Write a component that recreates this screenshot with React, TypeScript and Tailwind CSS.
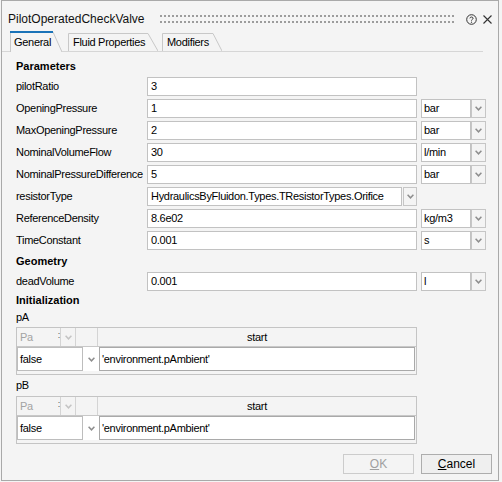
import React from 'react';

const Chevron = ({ color = '#8e8e8e' }: { color?: string }) => (
  <svg width="7" height="5" viewBox="0 0 7 5">
    <path d="M0.6 0.8 L3.5 3.8 L6.4 0.8" stroke={color} strokeWidth="1.5" fill="none" />
  </svg>
);

const ArrowBox = ({ w = 'w-[15px]' }: { w?: string }) => (
  <div className={`${w} h-[19px] border border-[#c6c6c6] bg-[#f4f4f4] flex items-center justify-center`}>
    <Chevron />
  </div>
);

type RowProps = { label: string; value: string; unit?: string };

const Row = ({ label, value, unit }: RowProps) => (
  <div className="flex h-[22px] items-start pt-[1px]">
    <div className="w-[131px] h-[19px] flex items-center">{label}</div>
    <div className="w-[270px] h-[19px] border border-[#c2c2c2] bg-white flex items-center pl-[3px]">{value}</div>
    {unit !== undefined && (
      <>
        <div className="ml-[4px] w-[50px] h-[19px] border border-[#c2c2c2] bg-white flex items-center pl-[2px]">{unit}</div>
        <ArrowBox />
      </>
    )}
  </div>
);

const InitTable = () => (
  <div className="w-[401px] h-[48px] border border-[#c4c4c4] bg-[#f4f4f4] flex flex-col">
    <div className="flex h-[19px] border-b border-[#c8c8c8]">
      <div className="w-[44px] h-[18px] border-r border-[#d4d4d4] flex items-center pl-[3px] text-[#a3a3a3] relative">
        Pa
        <span className="absolute right-[0px] top-[3px] text-[#555] text-[9px] leading-none">:</span>
      </div>
      <div className="w-[15px] h-[18px] border-r border-[#d4d4d4] flex items-center justify-center">
        <Chevron color="#c4c4c4" />
      </div>
      <div className="w-[22px] h-[18px] border-r border-[#d4d4d4]" />
      <div className="flex-1 h-[18px] flex items-center justify-center">start</div>
    </div>
    <div className="flex h-[24px]">
      <div className="w-[66px] h-[24px] border border-[#bdbdbd] bg-white flex items-center pl-[2px]">false</div>
      <div className="w-[16px] h-[24px] bg-white flex items-center justify-center">
        <Chevron />
      </div>
      <div className="w-[316px] h-[24px] border border-[#a9a9a9] bg-white flex items-center pl-[2px]">'environment.pAmbient'</div>
    </div>
  </div>
);

export default function App() {
  return (
    <div className="w-[502px] h-[482px] bg-[#f4f4f4]">
      <div className="ml-[1px] w-[498px] h-[481px] border border-[#a9a9a9] bg-[#f4f4f4] flex flex-col font-['Liberation_Sans',Arial,sans-serif] text-[11px] tracking-[-0.3px] text-black">
        {/* Title bar */}
        <div className="h-[30px] pt-[6px] flex items-center">
          <div className="w-[158px] pl-[6px] text-[12px] tracking-normal text-[#111]">PilotOperatedCheckValve</div>
          <svg width="295" height="8" className="block">
            <defs>
              <pattern id="grip" width="4" height="6" patternUnits="userSpaceOnUse">
                <rect x="0" y="0" width="2" height="2" fill="#9c9c9c" />
              </pattern>
            </defs>
            <rect x="0" y="0" width="295" height="8" fill="url(#grip)" />
          </svg>
          <svg width="11" height="11" viewBox="0 0 11 11" className="ml-[11px] block">
            <circle cx="5.5" cy="5.5" r="4.8" stroke="#333" strokeWidth="1" fill="none" />
            <path d="M3.9 4.3 C3.9 2.6 7.1 2.6 7.1 4.3 C7.1 5.4 5.5 5.3 5.5 6.6" stroke="#333" strokeWidth="1" fill="none" />
            <circle cx="5.5" cy="8.2" r="0.6" fill="#333" />
          </svg>
          <svg width="9" height="9" viewBox="0 0 9 9" className="ml-[6px] block">
            <path d="M0.5 0.5 L8.5 8.5 M8.5 0.5 L0.5 8.5" stroke="#333" strokeWidth="1.1" />
          </svg>
        </div>

        {/* Tab bar */}
        <div className="w-[481px] h-[21px] border-b border-[#d6d6d6] flex items-end pl-[8px]">
          <div className="relative w-[52px] h-[21px] -mb-[1px] flex items-center pl-[4px] pt-[1px]">
            <svg width="52" height="21" className="absolute left-0 top-0">
              <polygon points="0,0 43,0 52,21 0,21" fill="#f4f4f4" />
              <path d="M0.5 21 V1 M43 1 L52 21" stroke="#c8c8c8" strokeWidth="1" fill="none" />
              <rect x="0" y="0" width="43" height="2" fill="#1a73b8" />
            </svg>
            <span className="relative">General</span>
          </div>
          <div className="relative ml-[6px] w-[90px] h-[18px] flex items-center pl-[5px]">
            <svg width="90" height="18" className="absolute left-0 top-0">
              <path d="M0.5 18 V0.5 H80 L90 18" stroke="#c8c8c8" strokeWidth="1" fill="none" />
            </svg>
            <span className="relative">Fluid Properties</span>
          </div>
          <div className="relative ml-[4px] w-[60px] h-[18px] flex items-center pl-[5px]">
            <svg width="60" height="18" className="absolute left-0 top-0">
              <path d="M0.5 18 V0.5 H51 L60 18" stroke="#c8c8c8" strokeWidth="1" fill="none" />
            </svg>
            <span className="relative">Modifiers</span>
          </div>
        </div>

        {/* Pane */}
        <div className="pl-[14px] pt-[4px] flex flex-col">
          <div className="h-[20px] flex items-center font-bold tracking-normal">Parameters</div>
          <Row label="pilotRatio" value="3" />
          <Row label="OpeningPressure" value="1" unit="bar" />
          <Row label="MaxOpeningPressure" value="2" unit="bar" />
          <Row label="NominalVolumeFlow" value="30" unit="l/min" />
          <Row label="NominalPressureDifference" value="5" unit="bar" />
          <div className="flex h-[22px] items-start pt-[1px]">
            <div className="w-[131px] h-[19px] flex items-center">resistorType</div>
            <div className="w-[255px] h-[19px] border border-[#c2c2c2] bg-white flex items-center pl-[3px]">HydraulicsByFluidon.Types.TResistorTypes.Orifice</div>
            <div className="ml-[1px]">
              <ArrowBox w="w-[14px]" />
            </div>
          </div>
          <Row label="ReferenceDensity" value="8.6e02" unit="kg/m3" />
          <Row label="TimeConstant" value="0.001" unit="s" />
          <div className="h-[19px] flex items-center font-bold tracking-normal">Geometry</div>
          <Row label="deadVolume" value="0.001" unit="l" />
          <div className="h-[14px] flex items-center font-bold tracking-normal">Initialization</div>
          <div className="h-[20px] flex items-center">pA</div>
          <InitTable />
          <div className="h-[21px] flex items-center">pB</div>
          <InitTable />
        </div>

        {/* Buttons */}
        <div className="mt-[10px] flex justify-end pr-[6px] gap-[7px]">
          <div className="w-[71px] h-[20px] border border-[#cccccc] bg-[#f4f4f4] flex items-center justify-center text-[#a0a0a0] text-[12px] tracking-normal">
            <span><span className="underline">O</span>K</span>
          </div>
          <div className="w-[71px] h-[20px] border border-[#adadad] bg-[#efefef] flex items-center justify-center text-[12px] tracking-normal">
            <span><span className="underline">C</span>ancel</span>
          </div>
        </div>
      </div>
    </div>
  );
}
